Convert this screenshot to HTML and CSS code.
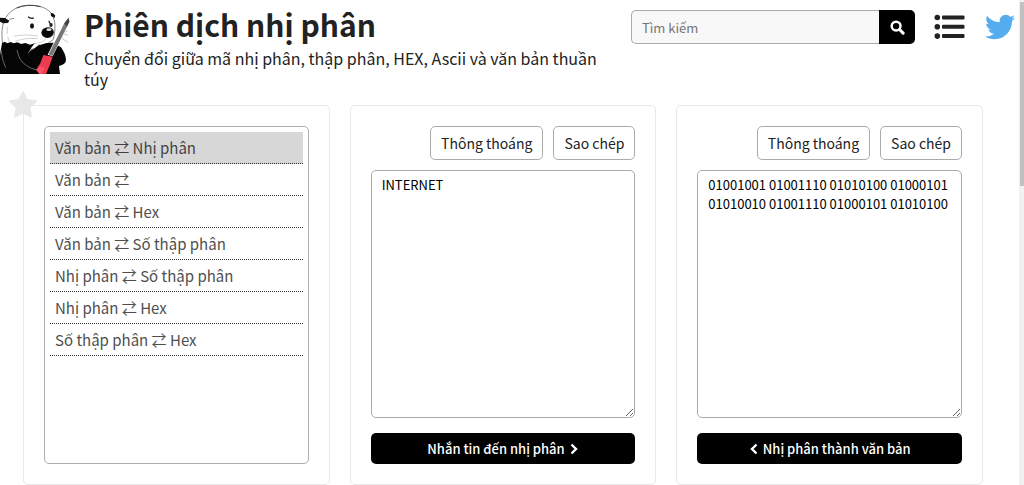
FILE: index.html
```html
<!DOCTYPE html>
<html lang="vi">
<head>
<meta charset="utf-8">
<meta name="viewport" content="width=device-width, initial-scale=1">
<title>Phiên dịch nhị phân</title>
<link rel="stylesheet" href="styles.css">
</head>
<body>
<header class="site-header">
  <svg class="logo" viewBox="0 0 210 225" aria-hidden="true">
    <path d="M8 132C5 108 4 86 12 64C24 34 50 17 88 16C124 15 152 28 160 52C168 74 165 95 160 118L130 140H40Z" fill="#fff" stroke="#888" stroke-width="3"/>
    <path d="M50 24Q82 10 122 20" fill="none" stroke="#444" stroke-width="3"/>
    <path d="M0 53L15 54L28 62L24 69L9 70L0 65ZM152 40Q160 37 166 47L163 54L153 48Z" fill="#111"/>
    <path d="M28 58L42 55" stroke="#888" stroke-width="3"/>
    <path d="M6 130L14 125L22 130L32 126L41 130L52 127L64 132L76 129L90 134L104 130L120 135L140 129L163 128L172 136L183 142Q197 161 198 181Q197 194 177 198L180 222H0V165Z" fill="#050505"/>
    <path d="M104 130L118 134L101 146L88 154L94 143Z" fill="#fff"/>
    <path d="M84 158Q92 154 97 145" fill="none" stroke="#777" stroke-width="3"/>
    <path d="M51 150Q57 183 80 197T109 208M3 150Q6 181 17 203" fill="none" stroke="#666" stroke-width="3"/>
    <path d="M84 50Q92 57 101 54M147 62Q147 69 154 73" fill="none" stroke="#222" stroke-width="4"/>
    <ellipse cx="96" cy="78" rx="6" ry="8" fill="#111"/>
    <ellipse cx="153" cy="75" rx="5" ry="6" fill="#222"/>
    <path d="M129 87Q144 77 157 86Q166 97 157 107Q146 118 132 111Q117 101 129 87Z" fill="#080808"/>
    <ellipse cx="147" cy="89" rx="8" ry="4" fill="#ddd"/>
    <path d="M139 115Q129 127 113 129M42 108Q76 101 114 108M46 123Q80 111 114 116M22 80V102M23 110L28 127" fill="none" stroke="#bbb" stroke-width="2"/>
    <path d="M184 99L205 106M178 111L205 127M186 98L202 94" stroke="#aaa" stroke-width="2"/>
    <path d="M143 164L192 66L206 51L209 64L203 78L158 169Z" fill="#fff"/>
    <path d="M146 163L193 70L206 53L208 65L201 80L157 168Z" fill="#777"/>
    <path d="M193 70L206 53L208 65L201 80Z" fill="#444"/>
    <path d="M130 165L158 170L149 196L138 222H119L108 210L121 190Z" fill="#ed3b50"/>
    <path d="M110 209L121 199L134 204L126 222H118Z" fill="#fb5268"/>
  </svg>
  <div class="heading">
    <h1 class="title">Phiên dịch nhị phân</h1>
    <p class="tagline">Chuyển đổi giữa mã nhị phân, thập phân, HEX, Ascii và văn bản thuần túy</p>
  </div>
  <form class="search" role="search">
    <input class="search-input" type="search" placeholder="Tìm kiếm" aria-label="Tìm kiếm">
    <button class="search-button" type="submit" aria-label="Tìm kiếm">
      <svg class="search-icon" viewBox="0 0 16 16" aria-hidden="true"><circle cx="6.5" cy="6.5" r="4.7" fill="none" stroke="currentColor" stroke-width="2.6"/><path d="M10.2 10.2L14 14" stroke="currentColor" stroke-width="3.2" stroke-linecap="round"/></svg>
    </button>
  </form>
  <button class="menu" type="button" aria-label="Menu">
    <svg class="menu-icon" viewBox="0 0 31 26" aria-hidden="true"><g fill="#222"><circle cx="3.3" cy="3.5" r="2.8"/><circle cx="3.3" cy="12.8" r="2.8"/><circle cx="3.3" cy="22.1" r="2.8"/><rect x="8" y="1.4" width="22.5" height="4" rx="1"/><rect x="8" y="10.8" width="22.5" height="4" rx="1"/><rect x="8" y="20.1" width="22.5" height="4" rx="1"/></g></svg>
  </button>
  <a class="twitter" href="#" aria-label="Twitter">
    <svg class="twitter-icon" viewBox="0 0 512 512" aria-hidden="true"><path fill="#55acee" d="M459.4 151.7c.3 4.5.3 9.1.3 13.6 0 138.7-105.6 298.6-298.6 298.6-59.5 0-114.7-17.2-161.1-47.1 8.4 1 16.6 1.3 25.3 1.3 49.1 0 94.2-16.6 130.3-44.8-46.1-1-84.8-31.2-98.1-72.8 6.5 1 13 1.6 19.8 1.6 9.4 0 18.8-1.3 27.6-3.6-48.1-9.7-84.1-52-84.1-103v-1.3c14 7.8 30.2 12.7 47.4 13.3-28.3-18.8-46.8-51-46.8-87.4 0-19.5 5.2-37.4 14.3-53 51.7 63.7 129.3 105.3 216.4 109.8-1.6-7.8-2.6-15.9-2.6-24 0-57.8 46.8-104.9 104.9-104.9 30.2 0 57.5 12.7 76.7 33.1 23.7-4.5 46.5-13.3 66.6-25.3-7.8 24.4-24.4 44.8-46.1 57.8 21.1-2.3 41.6-8.1 60.4-16.2-14.3 20.8-32.2 39.3-52.6 54.3z"/></svg>
  </a>
</header>
<main class="panels">
  <section class="card">
    <button class="favorite" type="button" aria-label="Yêu thích">
      <svg class="favorite-icon" viewBox="0 0 24 24" aria-hidden="true"><path d="M12 1L15.3 7.7L23 8.8L17.5 14.2L18.8 22L12 18.4L5.2 22L6.5 14.2L1 8.8L8.7 7.7Z" fill="#e8e8e8" stroke="#e8e8e8" stroke-width="1.6" stroke-linejoin="round"/></svg>
    </button>
    <select class="modes" size="7" aria-label="Kiểu chuyển đổi">
      <option class="mode" selected>Văn bản ⇄ Nhị phân</option>
      <option class="mode">Văn bản ⇄</option>
      <option class="mode">Văn bản ⇄ Hex</option>
      <option class="mode">Văn bản ⇄ Số thập phân</option>
      <option class="mode">Nhị phân ⇄ Số thập phân</option>
      <option class="mode">Nhị phân ⇄ Hex</option>
      <option class="mode">Số thập phân ⇄ Hex</option>
    </select>
  </section>
  <section class="card">
    <div class="tools">
      <button class="tool" type="button">Thông thoáng</button>
      <button class="tool" type="button">Sao chép</button>
    </div>
    <textarea class="text" aria-label="Văn bản" spellcheck="false">INTERNET</textarea>
    <button class="convert" type="button">Nhắn tin đến nhị phân
      <svg class="chevron" viewBox="0 0 10 12" aria-hidden="true"><path d="M2.5 1.5L7 6L2.5 10.5" fill="none" stroke="currentColor" stroke-width="2.4"/></svg>
    </button>
  </section>
  <section class="card">
    <div class="tools">
      <button class="tool" type="button">Thông thoáng</button>
      <button class="tool" type="button">Sao chép</button>
    </div>
    <textarea class="text" aria-label="Nhị phân" spellcheck="false">01001001 01001110 01010100 01000101 01010010 01001110 01000101 01010100</textarea>
    <button class="convert" type="button">
      <svg class="chevron" viewBox="0 0 10 12" aria-hidden="true"><path d="M7.5 1.5L3 6L7.5 10.5" fill="none" stroke="currentColor" stroke-width="2.4"/></svg>
      Nhị phân thành văn bản</button>
  </section>
</main>
<div class="scroll-track" aria-hidden="true"><div class="scroll-thumb"></div></div>
</body>
</html>
```
FILE: styles.css
```css
* { box-sizing: border-box; }

body {
  margin: 0;
  background: #fff;
  color: #222;
  font-family: "Noto Sans CJK SC", "Noto Sans", sans-serif;
  font-size: 16px;
  line-height: 20px;
}

button, input, select, textarea { font-family: inherit; }

.site-header {
  display: flex;
  align-items: flex-start;
  min-height: 105px;
  padding-right: 9px;
}

.logo { flex: none; width: 70px; height: 75px; }

.heading { flex: 1; min-width: 0; padding: 4px 30px 0 14px; }

.title { margin: 0; font-size: 30px; line-height: 40px; font-weight: 700; }

.tagline { margin: 4px 0 0; font-size: 16px; line-height: 21px; }

.search { display: flex; flex: none; width: 284px; height: 34px; margin-top: 10px; }

.search-input {
  flex: 1;
  min-width: 0;
  padding: 0 10px;
  border: 1px solid #aaa;
  border-right: 0;
  border-radius: 5px 0 0 5px;
  background: #f8f8f8;
  font-size: 13px;
  appearance: none;
}

.search-input::placeholder { color: #757575; }

.search-button {
  display: grid;
  place-items: center;
  width: 36px;
  padding: 0;
  border: 0;
  border-radius: 0 5px 5px 0;
  background: #000;
  color: #fff;
}

.search-icon { width: 15px; height: 15px; }

.menu { margin: 14px 0 0 19px; padding: 0; border: 0; background: none; }

.menu-icon { display: block; width: 31px; height: 26px; }

.twitter { margin: 12px 0 0 20px; }

.twitter-icon { display: block; width: 30px; height: 30px; }

.panels {
  display: grid;
  grid-template-columns: repeat(3, minmax(0, 1fr));
  gap: 20px;
  padding: 0 41px 0 23px;
}

.card {
  position: relative;
  display: flex;
  flex-direction: column;
  min-height: 380px;
  padding: 20px;
  border: 1px solid #e8e8e8;
  border-radius: 5px;
}

.favorite {
  position: absolute;
  top: -15px;
  left: -15px;
  padding: 0;
  border: 0;
  background: none;
}

.favorite-icon { display: block; width: 28px; height: 28px; }

.modes {
  flex: 1;
  width: 100%;
  padding: 5px;
  border: 1px solid #999;
  border-radius: 5px;
  background: #fff;
  color: #222;
  font-size: 15px;
  opacity: 0.8;
  overflow: hidden;
  outline: 0;
}

.mode {
  min-height: 32px;
  padding: 5px;
  border-bottom: 1px dotted #000;
  line-height: 21px;
}

.tools { display: flex; justify-content: flex-end; gap: 10px; }

.tool {
  height: 34px;
  padding: 0 10px;
  border: 1px solid #aaa;
  border-radius: 5px;
  background: #fff;
  color: #222;
  font-size: 14px;
}

.text {
  flex: 1;
  width: 100%;
  margin: 10px 0 15px;
  padding: 4px 10px;
  border: 1px solid #aaa;
  border-radius: 5px;
  color: #000;
  font-size: 13px;
  line-height: 19px;
}

.convert {
  display: flex;
  align-items: center;
  justify-content: center;
  gap: 4px;
  height: 31px;
  padding: 0;
  border: 0;
  border-radius: 5px;
  background: #000;
  color: #fff;
  font-size: 13px;
  font-weight: 500;
}

.chevron { width: 10px; height: 12px; }

.scroll-track {
  position: fixed;
  top: 0;
  right: 0;
  bottom: 0;
  width: 5px;
  padding-top: 2px;
  background: #f1f1f1;
}

.scroll-thumb { height: 38%; margin-left: 1px; background: #c1c1c1; }
```
